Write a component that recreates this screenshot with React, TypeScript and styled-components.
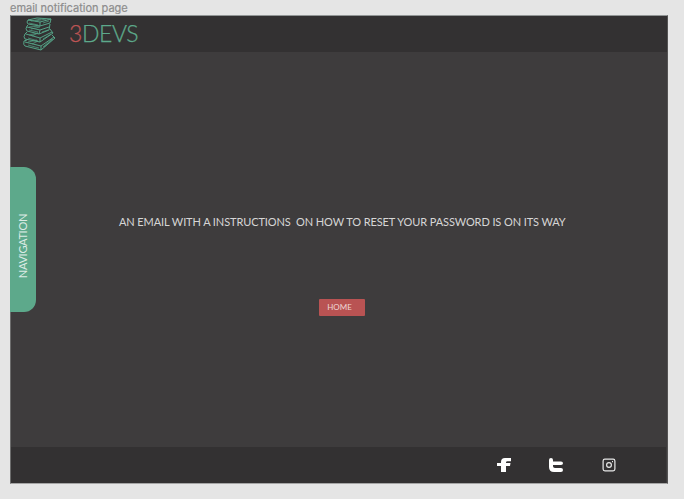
import React from "react";
import styled, { createGlobalStyle } from "styled-components";

const GlobalStyle = createGlobalStyle`
  * { box-sizing: border-box; }
  body { margin: 0; background: #e5e5e5; }
`;

const Canvas = styled.div`
  width: 684px;
  height: 499px;
  padding-left: 10px;
  overflow: hidden;
  background: #e5e5e5;
  font-family: Lato, sans-serif;
`;

const FrameLabel = styled.div`
  height: 15px;
  font: 400 11px/16px Inter, sans-serif;
  letter-spacing: -0.01px;
  color: #8d8d8d;
  -webkit-text-stroke: 0.2px currentColor;
  white-space: nowrap;
`;

const Page = styled.div`
  width: 658px;
  height: 469px;
  display: flex;
  flex-direction: column;
  border: 1px solid #555454;
  border-top-color: #929696;
  border-bottom-color: #a5a5a5;
  border-left-color: #6d6d6d;
  background: #3e3c3d;
`;

const Header = styled.header`
  flex: 0 0 36px;
  display: flex;
  align-items: flex-start;
  background: #333132;
`;

const Books = styled.svg`
  flex: none;
  width: 33px;
  height: 34px;
  margin: 1px 0 0 12px;
  fill: none;
  stroke: #55a387;
  stroke-linejoin: round;
`;

const Brand = styled.div`
  margin: 3px 0 0 13px;
  font-size: 23px;
  line-height: 28px;
  font-weight: 300;
  letter-spacing: -0.4px;
  color: #5da98b;
  -webkit-text-stroke: 0.25px currentColor;
`;

const BrandNumber = styled.span`
  color: #bd5454;
`;

const Main = styled.main`
  flex: 1;
  display: flex;
  align-items: flex-start;
`;

const NavTab = styled.nav`
  flex: none;
  width: 26px;
  height: 145px;
  margin: 115px 0 0 -1px;
  padding: 14px 2px 0 0;
  display: flex;
  align-items: center;
  justify-content: center;
  border-radius: 0 12px 12px 0;
  background: #5da98b;
`;

const NavLabel = styled.span`
  writing-mode: vertical-rl;
  transform: rotate(180deg);
  font-size: 11px;
  line-height: 13px;
  letter-spacing: -0.3px;
  color: #dcebe5;
`;

const Content = styled.section`
  flex: 1;
  display: flex;
  flex-direction: column;
  align-items: flex-start;
  padding: 162px 0 0 83px;
`;

const Message = styled.p`
  margin: 0;
  font-size: 11px;
  line-height: 16px;
  letter-spacing: -0.1px;
  color: #d6d6d6;
  white-space: pre;
`;

const HomeButton = styled.button`
  width: 46px;
  height: 17px;
  margin: 69px 0 0 200px;
  padding: 0 5px 1px 0;
  border: 0;
  border-radius: 1px;
  background: #b95353;
  color: #eed5d5;
  font: 400 8px/15px Lato, sans-serif;
`;

const Footer = styled.footer`
  flex: 0 0 36px;
  display: flex;
  align-items: center;
  padding-left: 486px;
  margin-right: 1px;
  background: #333132;
`;

const SocialIcon = styled.svg<{ $gap?: number }>`
  flex: none;
  width: 14px;
  height: 14px;
  margin-right: ${({ $gap = 0 }) => $gap}px;
  fill: #fff;
`;

const CameraIcon = styled(SocialIcon)`
  fill: none;
  stroke: #e8e8e8;
  stroke-width: 1.2;
`;

export default function App() {
  return (
    <>
      <GlobalStyle />
      <Canvas>
        <FrameLabel>email notification page</FrameLabel>
        <Page>
          <Header>
            <Books viewBox="0 0 33 34">
              <g strokeWidth="1">
                <path d="M5 3 14 1 28 2 27 6 17 9 5 7Q3 5 5 3L17 5 28 2M17 5V9" />
                <path d="M5 8 4 9Q2 12 4 14L16 17 26 13 27 7M4 10l13 3 9-3M17 13l-1 4" />
                <path d="M4 15 2 17Q0 20 2 22L17 25 30 16 27 12M3 17l14 4 12-6M17 21v4" />
                <path d="M4 23 1 24Q0 28 2 29L18 33 32 21 29 18M2 25l16 4 13-9M18 29v4" />
              </g>
              <path strokeWidth=".7" d="M8 4l10-2M12 4l11-2M6 10l11-1M8 12l9-2M6 18l9-2M9 19l6-3M5 25l9-2M9 27l6-3M20 6l6-2M19 15l6-2M20 22l8-5M21 30l9-8M20 30l9-8M6 6l9 2M6 13l9 2M5 21l10 3M5 28l11 3" />
            </Books>
            <Brand><BrandNumber>3</BrandNumber>DEVS</Brand>
          </Header>
          <Main>
            <NavTab><NavLabel>NAVIGATION</NavLabel></NavTab>
            <Content>
              <Message>{"AN EMAIL WITH A INSTRUCTIONS  ON HOW TO RESET YOUR PASSWORD IS ON ITS WAY"}</Message>
              <HomeButton>HOME</HomeButton>
            </Content>
          </Main>
          <Footer>
            <SocialIcon $gap={38} viewBox="0 0 14 14" aria-label="Facebook">
              <path d="M14 0v3.2h-3.5Q9 3.2 9 4.6V5h4.5L13 8H9v6H4V8H0V5h4V4Q4 0 8 0Z" />
            </SocialIcon>
            <SocialIcon $gap={38.5} viewBox="0 0 14 14" aria-label="Twitter">
              <path d="M0 2Q0 0 2 0t2 2v1.4h8q2 0 2 1.8T12 7H4v1.3q0 1.7 2 1.7h6q2 0 2 2t-2 2H5q-5 0-5-5Z" />
            </SocialIcon>
            <CameraIcon viewBox="0 0 14 14" aria-label="Instagram">
              <rect x="1.1" y="1.1" width="11.8" height="11.8" rx="1.8" />
              <circle cx="7" cy="7" r="2.4" />
              <path d="M10 3.7h1" />
            </CameraIcon>
          </Footer>
        </Page>
      </Canvas>
    </>
  );
}
